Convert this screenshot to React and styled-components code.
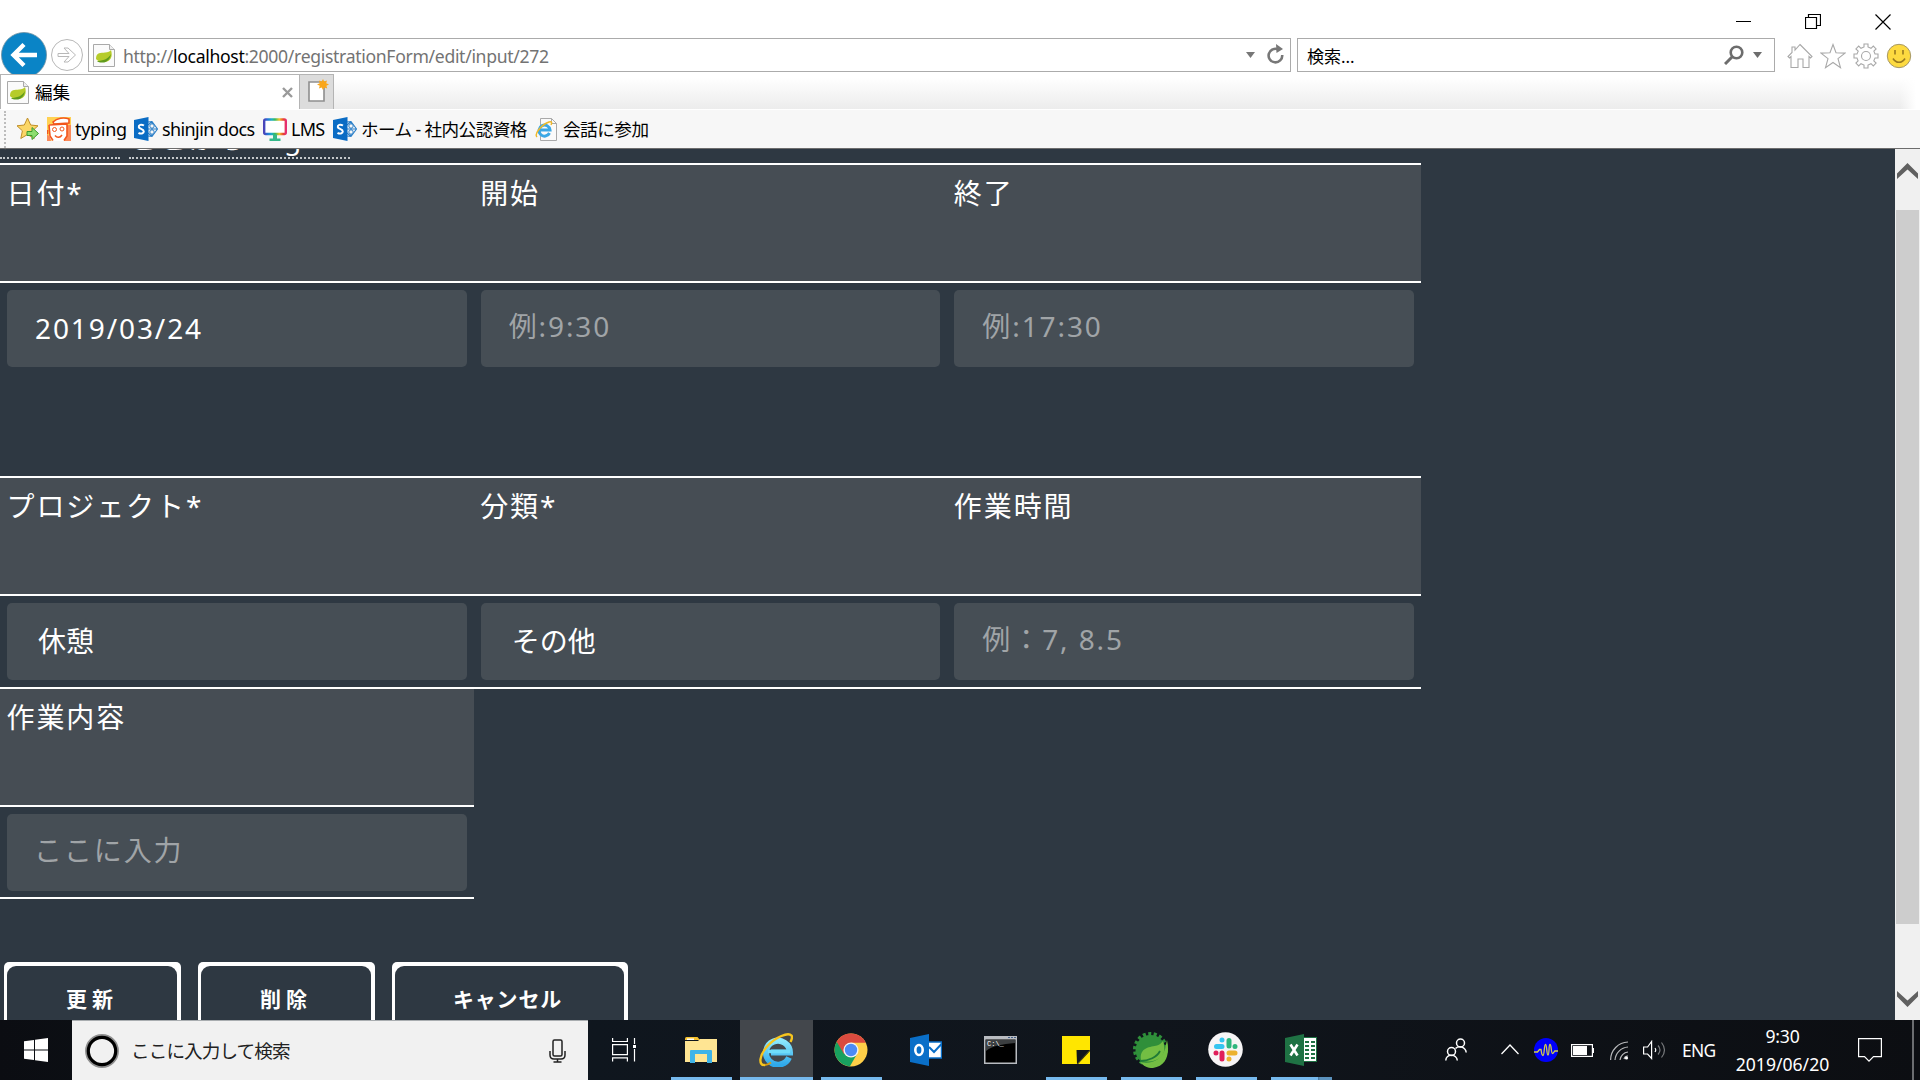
import React from "react";
import styled, { createGlobalStyle } from "styled-components";

const Global = createGlobalStyle`
  * { box-sizing: border-box; }
  html, body { margin: 0; padding: 0; overflow: hidden; }
  body { font-family: "Noto Sans", "Noto Sans CJK JP", sans-serif; }
  svg { display: block; flex: none; }
`;

const Screen = styled.div`
  width: 1920px; height: 1080px; display: flex; flex-direction: column;
  overflow: hidden; background: #fff;
`;
const Label = styled.span`
  font-size: ${p => p.$size || 18}px;
  letter-spacing: ${p => p.$ls || 0}px;
  line-height: 24px; white-space: pre;
  padding-top: ${p => p.$drop || 0}px;
  color: ${p => p.$color || "#000"};
`;
const Spacer = styled.div`flex: 1;`;

/* ---------- browser frame ---------- */
const TitleBar = styled.div`
  height: 38px; flex: none; display: flex; justify-content: flex-end;
  padding: 14px 29px 0 0; gap: 54px;
`;
const NavRow = styled.div`
  height: 36px; flex: none; display: flex; align-items: flex-start; padding-left: 1px;
`;
const BackSlot = styled.div`width: 47px; margin-top: -6px;`;
const ForwardSlot = styled.div`width: 40px; padding: 0 0 0 2px;`;
const Field = styled.div`
  height: 34px; width: ${p => p.$w}px; border: 1px solid #ababab; background: #fff;
  display: flex; align-items: center; padding: 0 6px 0 ${p => p.$pl}px;
  margin-right: ${p => p.$mr}px;
`;
const UrlText = styled(Label)`margin-left: 8px; b { font-weight: 400; color: #000; }`;
const Tools = styled.div`display: flex; gap: 7px; padding-top: 5px;`;

const TabRow = styled.div`
  height: 35px; flex: none; display: flex; position: relative; z-index: 1;
  background: linear-gradient(90deg, transparent 1900px, #fff 1916px), linear-gradient(#fff 10%, #ececec);
`;
const Tab = styled.div`
  width: 300px; border: 1px solid #b4b4b4; border-bottom: 0; background: #fff;
  display: flex; align-items: center; padding: 0 6px 0 6px; gap: 6px;
`;
const NewTab = styled.div`
  width: 34px; background: #dcdcdc; border: 1px solid #b4b4b4; border-left: 0; border-bottom: 0;
  padding: 4px 0 0 8px;
`;
const Bookmarks = styled.div`
  height: 40px; flex: none; background: #f7f7f7; border-top: 1px solid #fff;
  border-bottom: 1px solid #6d6d6d; display: flex; align-items: center; padding: 0 0 0 4px;
`;
const Grip = styled.div`width: 0; height: 37px; border-left: 2px dotted #bcbcbc; margin: 0 10px 0 0;`;
const Bookmark = styled.div`
  display: flex; align-items: center; gap: ${p => p.$gap || 4}px; width: ${p => p.$w}px;
`;

/* ---------- page ---------- */
const Viewport = styled.div`flex: 1; min-height: 0; display: flex; background: #2e3842;`;
const Page = styled.main`
  width: 1895px; overflow: hidden; color: #fff; font-size: 28px; letter-spacing: 1.900px;
`;
const Links = styled.nav`height: 14px; display: flex; align-items: flex-end; gap: 9px; padding-bottom: 4px;`;
const PageLink = styled.a`
  color: #fff; white-space: nowrap; line-height: 37px; width: ${p => p.$w}px;
  border-bottom: 2px dotted #c3c7ca; flex: none;
`;
const Table = styled.section`width: ${p => p.$w}px; margin-bottom: ${p => p.$mb || 0}px;`;
const HeadRow = styled.div`
  height: 120px; background: #464d54; display: flex;
  border-top: 2px solid #fff; border-bottom: 2px solid #fff;
`;
const SubHead = styled(HeadRow)`border-top: 0; height: 118px;`;
const HeadCell = styled.div`flex: 1; padding: 8px 6px 8px 6.500px; line-height: 40px; white-space: nowrap;`;
const InputRow = styled.div`
  display: flex; padding-top: 7px; height: ${p => p.$h}px;
  border-bottom: ${p => (p.$ruled ? 2 : 0)}px solid #fff;
`;
const InputCell = styled.div`flex: 1; padding: 0 7px;`;
const Input = styled.div`
  height: 77px; border-radius: 5px; background: #464e55; white-space: nowrap;
  display: flex; align-items: center; line-height: 40px;
  padding: 0 0 ${p => p.$lift || 2}px ${p => p.$pl || 28}px;
  color: ${p => (p.$hint ? "#a0a4a7" : "#fff")};
  letter-spacing: ${p => (p.$tight ? 0 : 1.9)}px;
`;
const Buttons = styled.div`display: flex; gap: 17px; padding: 63px 0 0 4px;`;
const Button = styled.button`
  width: ${p => p.$w}px; height: 80px; border: 0; padding: 4px 4px 4px 3px; background: #fff;
  border-radius: 5px; color: #fff; font-family: inherit; display: flex;
`;
const Face = styled.span`
  flex: 1; height: 72px; background: #2e3842; border-radius: 9px; line-height: 66px;
  font-size: 21px; font-weight: 600; letter-spacing: ${p => p.$ls}px; padding-right: ${p => p.$pr || 0}px;
`;
const ScrollBar = styled.div`
  width: 25px; background: #f0f0f0; display: flex; flex-direction: column; align-items: center;
  padding: 14px 0 13px 0;
`;
const Thumb = styled.div`width: 23px; height: 714px; background: #cdcdcd; margin: 31px 0 67px;`;

/* ---------- taskbar ---------- */
const TaskBar = styled.footer`
  height: 60px; flex: none; background: linear-gradient(90deg, #0b0d12, #0f161e 30%, #10151c 60%, #0c0e12);
  display: flex;
`;
const Start = styled.div`width: 72px; padding: 18px 0 0 24px;`;
const SearchBox = styled.div`
  width: 516px; background: #f1f1f1; border-top: 1px solid #a9adb0; display: flex; align-items: center;
  padding: 0 22px 0 12px; gap: 11px;
`;
const TaskView = styled.div`width: 76px; padding: 18px 0 0 24px;`;
const TaskApp = styled.div`
  width: 75px; display: flex; flex-direction: column; align-items: center; justify-content: space-between;
`;
const AppFace = styled.div`
  width: 73px; height: 57px; display: flex; align-items: center; justify-content: center; padding: 2px 2px 0 0;
  background: ${p => (p.$active ? "#43474c" : "transparent")};
`;
const Underline = styled.div`
  height: 3px; width: ${p => (p.$active ? 73 : 61)}px;
  background: ${p => (!p.$open ? "transparent" : p.$stacked
    ? "linear-gradient(90deg, #76b9ed 47px, #44739a 47px, #5b92bd 49px)" : "#76b9ed")};
`;
const Tray = styled.div`display: flex; align-items: flex-start; flex: 1; padding-left: 106px;`;
const TrayItem = styled.div`width: ${p => p.$w}px; padding-top: ${p => p.$top}px;`;
const Clock = styled.div`
  width: 109px; text-align: center; padding-top: 4px; display: flex; flex-direction: column; gap: 4px;
`;
const ShowDesktop = styled.div`width: 8px; height: 60px; border-left: 2px solid #6b6d70;`;

/* ---------- icons ---------- */
const Leaf = () => (
  <svg width="22" height="23" viewBox="0 0 22 23">
    <path d="M.5.5h16l5 5v17H.5z" fill="#fafafa" stroke="#a9a9a9" />
    <path d="M16.500.5v5h5" fill="#eee" stroke="#a9a9a9" />
    <path d="M3 15C3 8 8 9 12 8.500c3 0 5-1 6-2.500 2 6 0 12-7 12-3 0-5 0-8-3z" fill="#b6cc2a" />
    <path d="M4 17c6 0 11-2 14-7-1 6-5 9-9 8.500-2 0-4-.5-5-1.500z" fill="#5f9a1c" />
  </svg>
);
const SharePoint = () => (
  <svg width="24" height="24" viewBox="0 0 24 24">
    <path d="M14 5l4-.5L23.500 12 18 19.500l-4-.5M14 8l4-3.500M14 16l4 3.500M18 5v14M23.500 12H14" fill="none" stroke="#2b7fc8" strokeWidth="1.100" />
    <circle cx="18" cy="9" r="2.200" fill="#f7f7f7" stroke="#2b7fc8" /><circle cx="18" cy="15" r="2.200" fill="#f7f7f7" stroke="#2b7fc8" />
    <path d="M0 3L14.500 0v24L0 21z" fill="#0a6cc4" />
    <path d="M10 8.500C7 6.800 4.500 8 4.800 10c.3 2 5 2 5 4.500 0 2-3 2.700-5.300 1.300" fill="none" stroke="#fff" strokeWidth="2" />
  </svg>
);
const FavStar = () => (
  <svg width="24" height="24" viewBox="0 0 24 24">
    <path d="M11.500 1l3.200 7 7.300.8-5.500 5 1.700 7.700-6.700-4-6.700 4 1.600-7.700-5.400-5 7.300-.8z" fill="#fbd666" stroke="#c08f2a" />
    <path d="M11 14.500h5v-4l6.500 6-6.500 6v-4h-5z" fill="#8ede6f" stroke="#3b9a2e" />
  </svg>
);
const Typing = () => (
  <svg width="24" height="24" viewBox="0 0 24 24">
    <path d="M0 0h24v24H0z" fill="#ffd152" /><path d="M2 7h18v12l-3 5H5l-3-4z" fill="#fff" />
    <path d="M20 8h4v16h-7l3-5zM0 17l3 3 1 4H0z" fill="#fb8a5a" />
    <path d="M6 5c4-4 11-5 16-3v4L7 7z" fill="#fff" stroke="#f2561d" strokeWidth="1.600" />
    <path d="M2 8l18-1M2 8l1 11 3 4.500M.5 13v4M20 7v12l-3 4.500" fill="none" stroke="#f2561d" strokeWidth="1.600" />
    <circle cx="7.500" cy="12.500" r="2" fill="none" stroke="#f2561d" /><circle cx="15" cy="12" r="2" fill="none" stroke="#f2561d" />
    <path d="M8 18.500c2 2.500 5 2.500 7-.5" fill="none" stroke="#f2561d" strokeWidth="1.500" />
  </svg>
);
const Lms = () => (
  <svg width="24" height="23" viewBox="0 0 24 23">
    <defs><linearGradient id="lms"><stop offset="0" stopColor="#4b43b8" /><stop offset=".15" stopColor="#2470d8" /><stop offset=".35" stopColor="#1cb0c0" /><stop offset=".5" stopColor="#35b95a" /><stop offset=".7" stopColor="#f0c52c" /><stop offset=".88" stopColor="#e8442c" /><stop offset="1" stopColor="#e52d72" /></linearGradient></defs>
    <rect x="1.200" y="1.500" width="21.600" height="14.500" rx="1.500" fill="#fff" stroke="url(#lms)" strokeWidth="2.400" />
    <path d="M10 16.500h4v4h3.500V23H6.500v-2.500H10z" fill="#35b98a" />
  </svg>
);
const IeGlyph = ({ s = 34 }) => (
  <svg width={s} height={s} viewBox="0 0 34 34">
    <defs><linearGradient id="ie" x2="0" y2="1"><stop offset="0" stopColor="#8ce8fd" /><stop offset="1" stopColor="#2fa9ea" /></linearGradient></defs>
    <path d="M30 24.500A12 12 0 1 1 31 19.500H12" fill="none" stroke="url(#ie)" strokeWidth="6" />
    <path d="M9 18.500h22" stroke="#6fdcfa" strokeWidth="3.500" />
    <path d="M6 32C-1 33 0 22 9 12.500 17 4 29-1 32.500 2.500c1 1.500.3 4-1 6.500" fill="none" stroke="#f7c51e" strokeWidth="2.400" />
    <path d="M6 32c2 0 4-1 6-2.500" fill="none" stroke="#d99a10" strokeWidth="2" />
  </svg>
);
const IeDoc = () => (
  <svg width="22" height="23" viewBox="0 0 22 23">
    <path d="M5.500.5h11l5 5v17h-16z" fill="#fafafa" stroke="#a9a9a9" /><path d="M16.500.5v5h5" fill="none" stroke="#a9a9a9" />
    <path d="M14.500 15A5.500 5.500 0 1 1 15 12H5" fill="none" stroke="#3ba8e6" strokeWidth="3" />
    <path d="M2 19C-1 16 6 7 14 4c3-1 3 1 2 3" fill="none" stroke="#efb92b" strokeWidth="1.500" />
  </svg>
);

const Explorer = () => (
  <svg width="32" height="26" viewBox="0 0 32 26">
    <path d="M0 1.500Q0 0 1.500 0h11L15 3H0z" fill="#f7c22f" /><rect x="2" y="1.500" width="7" height="1.500" fill="#fff" />
    <path d="M0 4h13l2-2h17v23H0z" fill="#ffe593" /><path d="M5 14q0-1 1-1h20q1 0 1 1v12h-5v-9H10v9H5z" fill="#3fb4e8" />
  </svg>
);
const Chrome = () => (
  <svg width="34" height="34" viewBox="0 0 34 34">
    <circle cx="17" cy="17" r="16.500" fill="#ffcf48" />
    <path d="M2.700 8.800A16.500 16.500 0 0 1 31.800 9.700H17L9.700 21z" fill="#db4b3f" />
    <path d="M2.700 8.800A16.500 16.500 0 0 0 15.800 33.400L23 21 17 17z" fill="#18a15f" />
    <path d="M2.700 8.800L10 21l7-11.300z" fill="#db4b3f" /><circle cx="17" cy="17" r="7.600" fill="#f3f3f3" /><circle cx="17" cy="17" r="6.200" fill="#4c8bf5" />
  </svg>
);
const Outlook = () => (
  <svg width="32" height="32" viewBox="0 0 32 32">
    <rect x="17" y="8" width="14.500" height="16" fill="#fff" stroke="#0a6fc8" strokeWidth="1.500" />
    <path d="M19 13l5 5 7.500-8" fill="none" stroke="#0a6fc8" strokeWidth="2" />
    <path d="M0 4L19 0v32L0 28z" fill="#0a6fc8" /><ellipse cx="9" cy="16" rx="3.700" ry="5" fill="none" stroke="#fff" strokeWidth="2.600" />
  </svg>
);
const Cmd = () => (
  <svg width="33" height="28" viewBox="0 0 33 28">
    <rect width="33" height="28" fill="#b9bcc1" /><rect x="1.500" y="3.500" width="30" height="23" fill="#000" />
    <path d="M2 4h29v3C18 8 8 10 2 15z" fill="#3c3f41" /><path d="M24 1.500h2m1 0h2m1 0h2" stroke="#44608a" strokeWidth="1.200" />
    <text x="3" y="10" fontSize="7" fill="#fff" fontFamily="Liberation Mono, monospace">C:\_</text>
  </svg>
);
const Sticky = () => (
  <svg width="28" height="28" viewBox="0 0 28 28"><path d="M0 0h28v14L15 28H0z" fill="#ffe600" /><path d="M14.500 14H28L15 28z" fill="#11161d" /><path d="M28 15v13H16z" fill="#ffe600" /></svg>
);
const Spring = () => (
  <svg width="36" height="36" viewBox="0 0 36 36">
    <circle cx="17.500" cy="17.500" r="15.500" fill="none" stroke="#2f8f3a" strokeWidth="4" strokeDasharray="3 2.410" />
    <circle cx="17.500" cy="18" r="15" fill="#2f8f3a" />
    <path d="M34 8c3 13 0 26-14 28-6 0-9-2-13-6 12 3 22-3 25-13z" fill="#73be43" />
    <path d="M8 28C6 15 18 15 24 13.500c3-1 4-2 6-4.500 3 10 1 16-7 19-5 2-10 2-15 0z" fill="#73be43" />
    <path d="M7 29c9 0 17-4 20-10" fill="none" stroke="#1f7a36" strokeWidth="1.800" />
  </svg>
);
const Slack = () => (
  <svg width="35" height="35" viewBox="0 0 35 35">
    <circle cx="17.500" cy="17.500" r="17.300" fill="#f7f5f6" />
    <g strokeWidth="5" strokeLinecap="round">
      <path d="M14 8v.01M8.500 14.500H14" stroke="#36c5f0" /><path d="M21 8.500V14M27 14.500v.01" stroke="#2eb67d" />
      <path d="M21 21h6M21 27v.01" stroke="#ecb22e" /><path d="M14 21v6M8 21v.01" stroke="#e01e5a" />
    </g>
  </svg>
);
const Excel = () => (
  <svg width="32" height="32" viewBox="0 0 32 32">
    <rect x="16" y="3.500" width="15.500" height="24" fill="#fff" stroke="#1f7244" />
    <path d="M20 8h4m2 0h4M20 12h4m2 0h4M20 16h4m2 0h4M20 20h4m2 0h4M20 24h4m2 0h4" stroke="#1f7244" strokeWidth="2" />
    <path d="M0 4L19 0v32L0 28z" fill="#1f7244" /><path d="M5.500 10.500l7 11M12.500 10.500l-7 11" stroke="#fff" strokeWidth="2.600" />
  </svg>
);

const apps = [
  { Icon: Explorer, open: true }, { Icon: IeGlyph, open: true, active: true }, { Icon: Chrome, open: true },
  { Icon: Outlook }, { Icon: Cmd }, { Icon: Sticky, open: true }, { Icon: Spring, open: true },
  { Icon: Slack, open: true }, { Icon: Excel, open: true, stacked: true },
];

function BrowserFrame() {
  return (
    <>
      <TitleBar>
        <svg width="15" height="15"><path d="M0 7.500h15" stroke="#000" /></svg>
        <svg width="16" height="16" fill="none" stroke="#000" strokeWidth="1.200"><path d="M.5 3.500h11v11H.5zM3.500 3.500V.5h12v11h-4" /></svg>
        <svg width="16" height="16" stroke="#000" strokeWidth="1.200"><path d="M.5.5l15 15M15.500.5l-15 15" /></svg>
      </TitleBar>
      <NavRow>
        <BackSlot>
          <svg width="46" height="46" viewBox="0 0 46 46">
            <circle cx="23" cy="23" r="22.500" fill="#0a84c6" stroke="#6f8fa0" strokeWidth=".8" />
            <path d="M36 23H13M23 12.500L12.500 23 23 33.500" fill="none" stroke="#fff" strokeWidth="4.400" />
          </svg>
        </BackSlot>
        <ForwardSlot>
          <svg width="34" height="34" viewBox="0 0 34 34" fill="#fff" stroke="#b8b8b8">
            <circle cx="17" cy="17" r="15.500" /><path d="M8 15.500h11l-5-5.500h4l7.500 7-7.500 7h-4l5-5.500H8z" />
          </svg>
        </ForwardSlot>
        <Field $w={1203} $pl={4} $mr={6}>
          <Leaf />
          <UrlText $color="#737373" $size={17.6} $ls={-0.32} $drop={2}>http://<b>localhost</b>:2000/registrationForm/edit/input/272</UrlText>
          <Spacer />
          <svg width="10" height="6"><path d="M0 0h9L4.500 6z" fill="#777" /></svg>
          <svg width="28" height="22" viewBox="0 0 28 22"><path d="M22.500 5.500A6.800 6.800 0 1 0 26.200 11" fill="none" stroke="#777" strokeWidth="2.600" /><path d="M20 0l7 5-6.500 4z" fill="#777" /></svg>
        </Field>
        <Field $w={478} $pl={9} $mr={12}>
          <Label $size={17} $drop={3}>検索...</Label>
          <Spacer />
          <svg width="20" height="20" viewBox="0 0 20 20" fill="none" stroke="#6d6d6d"><circle cx="12.500" cy="7.500" r="5.800" strokeWidth="2.600" /><path d="M8 12l-7 7" strokeWidth="3" /></svg>
          <svg width="24" height="6"><path d="M9 0h9l-4.500 6z" fill="#6d6d6d" /></svg>
        </Field>
        <Tools>
          <svg width="26" height="26" viewBox="0 0 26 26" fill="#fff" stroke="#a8a8a8" strokeWidth="1.100"><path d="M13 1.500l12 12-1.500 1.500L22 13.500V24.500h-6V16h-5v8.500H4V13.500L2.500 15 1 13.500 5 9.500V4h3v3z" /></svg>
          <svg width="26" height="26" viewBox="0 0 26 26" fill="#fff" stroke="#a8a8a8" strokeWidth="1.100"><path d="M13 1.500l3 8.300 9 .3-7 5.500 2.500 9L13 19.500 5.500 24.600 8 15.600l-7-5.500 9-.3z" /></svg>
          <svg width="26" height="26" viewBox="0 0 26 26" fill="#fff" stroke="#a8a8a8" strokeWidth="1.100"><path d="M11 1h4v3l3 1.300 2.300-2.200 2.800 2.800-2.200 2.300L22 11h3v4h-3l-1.200 2.800 2.300 2.300-2.800 2.800L18 20.700 15 22v3h-4v-3l-3-1.300-2.300 2.200-2.800-2.800 2.200-2.300L4 15H1v-4h3l1.200-2.800L2.900 5.900l2.800-2.800L8 5.300 11 4z" /><circle cx="13" cy="13" r="4.500" /></svg>
          <svg width="26" height="26" viewBox="0 0 26 26"><circle cx="13" cy="13" r="11.700" fill="#fdda40" stroke="#a69867" /><path d="M9 7v4.500M17 7v4.500M7 15.500c3 5 9 5 12 0" fill="none" stroke="#9a7b20" strokeWidth="1.600" /></svg>
        </Tools>
      </NavRow>
      <TabRow>
        <Tab>
          <Leaf /><Label $size={17.6}>編集</Label><Spacer />
          <svg width="11" height="11" stroke="#9a9a9a" strokeWidth="2.400"><path d="M1 1l9 9M10 1l-9 9" /></svg>
        </Tab>
        <NewTab>
          <svg width="21" height="24" viewBox="0 0 21 24"><path d="M1 3h15v19H1z" fill="#fff" stroke="#8e8e8e" strokeWidth="1.600" /><path d="M15 0l1.200 2.500L19 1.500l-.8 2.800L21 5.500l-2.600 1.200.8 2.700-2.800-1L15 11l-1.300-2.600-2.800 1 .9-2.700L9 5.500l2.700-1.200-.8-2.800 2.800 1z" fill="#f9a61a" /></svg>
        </NewTab>
      </TabRow>
      <Bookmarks>
        <Grip />
        <Bookmark $w={31}><FavStar /></Bookmark>
        <Bookmark $w={87}><Typing /><Label $ls={-0.3}>typing</Label></Bookmark>
        <Bookmark $w={129}><SharePoint /><Label $ls={-0.6}>shinjin docs</Label></Bookmark>
        <Bookmark $w={70} $gap={4}><Lms /><Label $ls={-0.8}>LMS</Label></Bookmark>
        <Bookmark $w={202}><SharePoint /><Label $size={17.6} $ls={-0.58}>ホーム - 社内公認資格</Label></Bookmark>
        <Bookmark $w={140} $gap={6}><IeDoc /><Label $size={17.6} $ls={-0.5}>会話に参加</Label></Bookmark>
      </Bookmarks>
    </>
  );
}

function RegistrationForm() {
  return (
    <Page>
      <Links>
        <PageLink $w={120}>メニュー</PageLink>
        <PageLink $w={221}>ここからLogout</PageLink>
      </Links>
      <Table $w={1421} $mb={109}>
        <HeadRow><HeadCell>日付*</HeadCell><HeadCell>開始</HeadCell><HeadCell>終了</HeadCell></HeadRow>
        <InputRow $h={84}>
          <InputCell><Input>2019/03/24</Input></InputCell>
          <InputCell><Input $hint $lift={5}>例:9:30</Input></InputCell>
          <InputCell><Input $hint $lift={5}>例:17:30</Input></InputCell>
        </InputRow>
      </Table>
      <Table $w={1421}>
        <HeadRow><HeadCell>プロジェクト*</HeadCell><HeadCell>分類*</HeadCell><HeadCell>作業時間</HeadCell></HeadRow>
        <InputRow $h={93} $ruled>
          <InputCell><Input $pl={31} $tight>休憩</Input></InputCell>
          <InputCell><Input $pl={31} $tight>その他</Input></InputCell>
          <InputCell><Input $hint $lift={5}>例：7, 8.5</Input></InputCell>
        </InputRow>
      </Table>
      <Table $w={474}>
        <SubHead><HeadCell>作業内容</HeadCell></SubHead>
        <InputRow $h={92} $ruled><InputCell><Input $hint $lift={6} $pl={27}>ここに入力</Input></InputCell></InputRow>
      </Table>
      <Buttons>
        <Button $w={177}><Face $ls={5}>更新</Face></Button>
        <Button $w={177}><Face $ls={5}>削除</Face></Button>
        <Button $w={236}><Face $ls={0.8} $pr={4}>キャンセル</Face></Button>
      </Buttons>
    </Page>
  );
}

function Taskbar() {
  return (
    <TaskBar>
      <Start><svg width="24" height="24" viewBox="0 0 24 24" fill="#fff"><path d="M0 3.300L10 2v9.500H0zM11 1.800L24 0v11.500H11zM0 12.500h10V22L0 20.700zM11 12.500h13V24l-13-1.800z" /></svg></Start>
      <SearchBox>
        <svg width="36" height="36" viewBox="0 0 36 36" fill="none"><circle cx="18" cy="18" r="15.700" stroke="#8f8f8f" strokeWidth="2.500" /><circle cx="18" cy="18" r="13.700" stroke="#000" strokeWidth="3.200" /></svg>
        <Label $size={18.6} $ls={-0.9} $color="#222">ここに入力して検索</Label>
        <Spacer />
        <svg width="17" height="24" viewBox="0 0 17 24" fill="none" stroke="#222" strokeWidth="1.500"><rect x="4" y="1" width="9" height="16" rx="1.500" /><path d="M1 12v4q0 4 4 4h7q4 0 4-4v-4M8.500 20v3M4.500 23h8" /></svg>
      </SearchBox>
      <TaskView><svg width="24" height="24" viewBox="0 0 24 24" fill="none" stroke="#fff" strokeWidth="1.200"><path d="M.6 0v3.500h14.800V0M.6 6.600h14.800v10H.6zM.6 23.500v-3.700h14.800v3.700M22.500 0v6M22.500 11v12.500" /><path d="M22.500 7v3" strokeWidth="3" /></svg></TaskView>
      {apps.map(({ Icon, open, active, stacked }, i) => (
        <TaskApp key={i}>
          <AppFace $active={active}><Icon /></AppFace>
          <Underline $open={open} $active={active} $stacked={stacked} />
        </TaskApp>
      ))}
      <Tray>
        <TrayItem $w={56} $top={18}><svg width="22" height="23" viewBox="0 0 22 23" fill="none" stroke="#fff" strokeWidth="1.500"><circle cx="15.500" cy="5" r="4" /><circle cx="6.500" cy="13.500" r="4" /><path d="M.8 22.500c0-7 11-7 11.500 0M10.500 10.500c3-3 10-2 10.700 4" /></svg></TrayItem>
        <TrayItem $w={33} $top={24}><svg width="18" height="11" fill="none" stroke="#fff" strokeWidth="1.300"><path d="M.5 10L9 1l8.500 9" /></svg></TrayItem>
        <TrayItem $w={37} $top={18}><svg width="24" height="24" viewBox="0 0 24 24"><circle cx="12" cy="12" r="12" fill="#0000fb" /><path d="M0 14h3.500l2-2.500H7c.5 2 .5 6 2 6s1-11 2.500-11S12.500 17 14 17s.5-10.500 2-10.500S17 15.500 18.500 15.500 20 13 21 13h3" fill="none" stroke="#d5cf4a" strokeWidth="1.300" /></svg></TrayItem>
        <TrayItem $w={39} $top={24}><svg width="23" height="13" viewBox="0 0 23 13"><rect x=".6" y=".6" width="20.800" height="11.800" fill="none" stroke="#fff" strokeWidth="1.200" /><rect x="2" y="2" width="14" height="9" fill="#fff" /><path d="M22.500 4v5" stroke="#fff" /></svg></TrayItem>
        <TrayItem $w={33} $top={21}><svg width="19" height="19" viewBox="0 0 19 19" fill="none" stroke="#b9babc" strokeWidth="1.200"><path d="M.6 19A18 18 0 0 1 18 1M5 19A14 14 0 0 1 18 6M10 19a9 9 0 0 1 8-8" /><path d="M14 18a4 4 0 0 1 4-3" /><circle cx="16.500" cy="17" r="1.600" fill="#fff" stroke="none" /></svg></TrayItem>
        <TrayItem $w={39} $top={20}><svg width="23" height="20" viewBox="0 0 23 20" fill="none" stroke="#fff" strokeWidth="1.200"><path d="M.6 7h4l4-5.500v17L4.600 14h-4zM12 8q1.500 2 0 4" /><path d="M15 5.500q4 4.500 0 9M18.500 2.500q6 7.500 0 15" stroke="#77797c" /></svg></TrayItem>
        <TrayItem $w={46} $top={18}><Label $size={17.4} $color="#fff" $ls={-0.7}>ENG</Label></TrayItem>
        <Clock><Label $size={17.6} $color="#fff" $ls={-0.2}>9:30</Label><Label $size={17.6} $color="#fff" $ls={0}>2019/06/20</Label></Clock>
        <Spacer />
        <TrayItem $w={54} $top={18}><svg width="24" height="25" viewBox="0 0 24 25" fill="none" stroke="#fff" strokeWidth="1.200"><path d="M.6.600h22.800v18H15.500L11 23.200l-4.500-4.600H.6z" /></svg></TrayItem>
        <ShowDesktop />
      </Tray>
    </TaskBar>
  );
}

export default function App() {
  return (
    <>
      <Global />
      <Screen>
        <BrowserFrame />
        <Viewport>
          <RegistrationForm />
          <ScrollBar>
            <svg width="21" height="16" viewBox="0 0 21 16"><path d="M0 10.500L10.500 0 21 10.500V16L10.500 6.500 0 16z" fill="#606060" /></svg>
            <Thumb />
            <svg width="21" height="16" viewBox="0 0 21 16"><path d="M0 5.500L10.500 16 21 5.500V0L10.500 9.500 0 0z" fill="#606060" /></svg>
          </ScrollBar>
        </Viewport>
        <Taskbar />
      </Screen>
    </>
  );
}
